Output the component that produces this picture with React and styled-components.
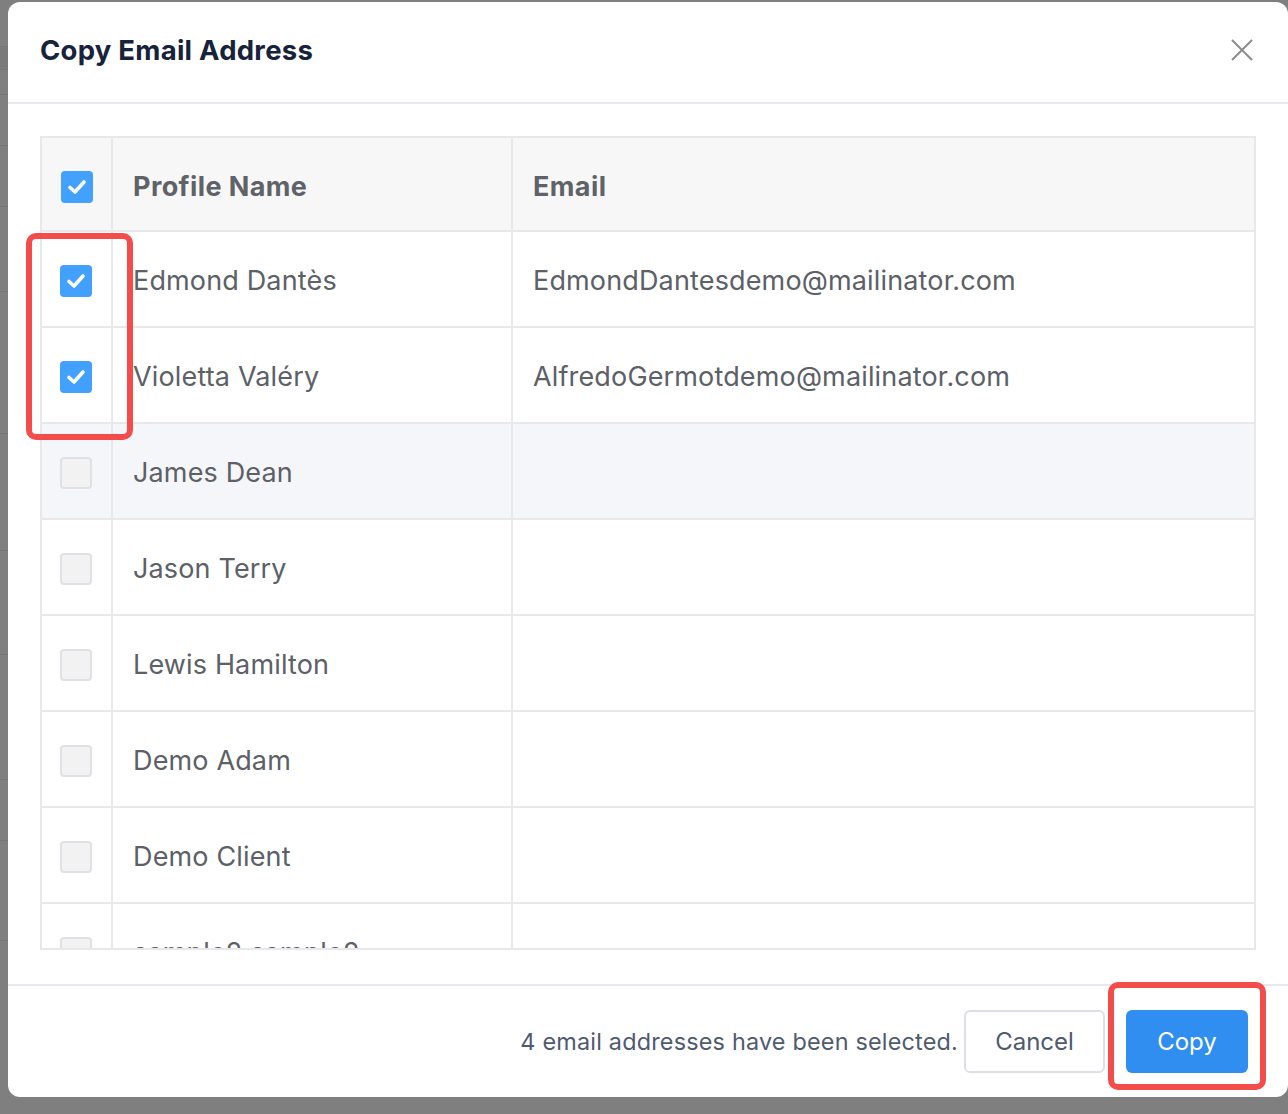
import React from 'react'
import styled, { createGlobalStyle } from 'styled-components'

const Global = createGlobalStyle`
  html, body { margin: 0; padding: 0; }
  body { font-family: Inter, "Noto Sans", "Liberation Sans", sans-serif; background: #7f7f7f; }
`

const Page = styled.div`
  position: relative;
  width: 1288px;
  height: 1114px;
  overflow: hidden;
  background: #7f7f7f;
`

const Backdrop = styled.div`
  display: flex;
  flex-direction: column;
`

const BackRow = styled.div`
  height: ${p => p.h}px;
  background: ${p => p.shade || '#7f7f7f'};
  border-bottom: 1px solid #767676;
`

const Modal = styled.div`
  position: absolute;
  left: 8px;
  top: 2px;
  width: 1280px;
  height: 1095px;
  background: #fff;
  border-radius: 12px;
  display: flex;
  flex-direction: column;
  overflow: hidden;
`

const Header = styled.div`
  height: 96px;
  flex-shrink: 0;
  display: flex;
  align-items: center;
  justify-content: space-between;
  padding: 0 35px 4px 32px;
  border-bottom: 2px solid #e6e9ee;
`

const Title = styled.h2`
  margin: 0;
  font-size: 27.5px;
  font-weight: 700;
  color: #17223b;
  letter-spacing: 0.25px;
`

const Close = styled.button`
  border: 0;
  background: none;
  padding: 0;
  width: 22px;
  height: 22px;
  display: flex;
  align-items: center;
  justify-content: center;
  cursor: pointer;
`

const Body = styled.div`
  flex: 1;
  padding: 32px 32px 0 32px;
`

const Scroll = styled.div`
  height: 812px;
  overflow: hidden;
  border-bottom: 2px solid #e6e8eb;
`

const Table = styled.table`
  width: 1216px;
  border-collapse: collapse;
  table-layout: fixed;
  font-size: 27px;
`

const Th = styled.th`
  height: 94px;
  box-sizing: border-box;
  background: #f7f7f7;
  border: 2px solid #e6e8eb;
  text-align: ${p => (p.center ? 'center' : 'left')};
  padding: ${p => (p.center ? '4px 0 0' : '4px 20px 0')};
  font-weight: 700;
  color: #5f6368;
  letter-spacing: 0.4px;
`

const Tr = styled.tr`
  background: ${p => (p.hover ? '#f5f6fa' : '#fff')};
`

const Td = styled.td`
  height: 92px;
  border: 2px solid #e6e8eb;
  text-align: ${p => (p.center ? 'center' : 'left')};
  padding: ${p => (p.center ? '2px 1px 0 0' : '2px 20px 0')};
  color: #5c6067;
  font-weight: 400;
  white-space: nowrap;
  letter-spacing: 0.15px;
`

const Box = styled.span`
  display: inline-flex;
  align-items: center;
  justify-content: center;
  vertical-align: middle;
  box-sizing: border-box;
  width: 32px;
  height: 32px;
  border-radius: 4px;
  background: ${p => (p.checked ? '#42a0ff' : '#f2f2f2')};
  border: ${p => (p.checked ? '0' : '2px solid #dfe1e6')};
`

const Footer = styled.div`
  height: 111px;
  flex-shrink: 0;
  border-top: 2px solid #e6e9ee;
  display: flex;
  align-items: center;
  justify-content: flex-end;
  padding-right: 40px;
`

const Note = styled.span`
  font-size: 23.4px;
  color: #4f5a70;
  margin-right: 6px;
  letter-spacing: 0.2px;
`

const Button = styled.button`
  height: 63px;
  box-sizing: border-box;
  border-radius: 6px;
  font-family: inherit;
  font-size: 24px;
  padding: 0;
  width: ${p => p.w}px;
  margin-left: ${p => p.ml || 0}px;
  border: ${p => (p.primary ? '0' : '2px solid #dcdfe4')};
  background: ${p => (p.primary ? '#2f8ef0' : '#fff')};
  color: ${p => (p.primary ? '#fff' : '#4f5a70')};
  cursor: pointer;
`

const Highlight = styled.div`
  position: absolute;
  box-sizing: border-box;
  border: 6px solid #f44b4b;
  border-radius: 10px;
  pointer-events: none;
`

const Check = ({ checked }) => (
  <Box checked={checked}>
    {checked && (
      <svg width="22" height="22" viewBox="0 0 22 22">
        <path d="M4 11.5 L9 16 L18 6" fill="none" stroke="#fff" strokeWidth="3.6" strokeLinecap="round" strokeLinejoin="round" />
      </svg>
    )}
  </Box>
)

const rows = [
  { name: 'Edmond Dantès', email: 'EdmondDantesdemo@mailinator.com', checked: true },
  { name: 'Violetta Valéry', email: 'AlfredoGermotdemo@mailinator.com', checked: true },
  { name: 'James Dean', email: '', hover: true },
  { name: 'Jason Terry', email: '' },
  { name: 'Lewis Hamilton', email: '' },
  { name: 'Demo Adam', email: '' },
  { name: 'Demo Client', email: '' },
  { name: 'sample2 sample2', email: '' },
]

const backRows = [46, 22, 24, 50, 60, 84, 141, 116, 103, 124, 60, 99, 185]

export default function App() {
  return (
    <Page>
      <Global />
      <Backdrop>
        {backRows.map((h, i) => (
          <BackRow key={i} h={h} shade={i === 1 ? '#7a7a7a' : undefined} />
        ))}
      </Backdrop>
      <Modal>
        <Header>
          <Title>Copy Email Address</Title>
          <Close aria-label="close">
            <svg width="22" height="22" viewBox="0 0 22 22">
              <path d="M1 1 L21 21 M21 1 L1 21" stroke="#8c8c8c" strokeWidth="2" />
            </svg>
          </Close>
        </Header>
        <Body>
          <Scroll>
            <Table>
              <colgroup>
                <col style={{ width: 71 }} />
                <col style={{ width: 400 }} />
                <col />
              </colgroup>
              <thead>
                <tr>
                  <Th center><Check checked /></Th>
                  <Th>Profile Name</Th>
                  <Th>Email</Th>
                </tr>
              </thead>
              <tbody>
                {rows.map(r => (
                  <Tr key={r.name} hover={r.hover}>
                    <Td center><Check checked={r.checked} /></Td>
                    <Td>{r.name}</Td>
                    <Td>{r.email}</Td>
                  </Tr>
                ))}
              </tbody>
            </Table>
          </Scroll>
        </Body>
        <Footer>
          <Note>4 email addresses have been selected.</Note>
          <Button w={141}>Cancel</Button>
          <Button primary w={122} ml={21}>Copy</Button>
        </Footer>
      </Modal>
      <Highlight style={{ left: 26, top: 233, width: 107, height: 207 }} />
      <Highlight style={{ left: 1108, top: 982, width: 158, height: 108 }} />
    </Page>
  )
}
